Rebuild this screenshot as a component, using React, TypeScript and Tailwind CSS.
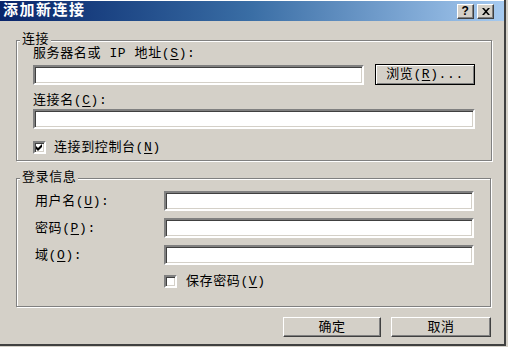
import { useState } from "react";

const font = "font-['Liberation_Mono','Noto_Sans_CJK_SC',monospace] text-[13px] leading-[13px] tracking-[0.6px] text-black";

const sunken =
  "border-2 border-t-[#808080] border-l-[#808080] border-b-white border-r-white bg-white shadow-[inset_1px_1px_0_#404040,inset_-1px_-1px_0_#d4d0c8]";

const raised =
  "border border-t-white border-l-white border-b-[#404040] border-r-[#404040] bg-[#d4d0c8] shadow-[inset_-1px_-1px_0_#808080]";

function Key({ k }: { k: string }) {
  return <span className="underline underline-offset-2">{k}</span>;
}

function Field({ className = "" }: { className?: string }) {
  return <input className={`${sunken} h-[20px] px-1 outline-none ${className}`} />;
}

function Check({ checked, onToggle }: { checked: boolean; onToggle: () => void }) {
  return (
    <button type="button" onClick={onToggle} className={`${sunken} flex h-[13px] w-[13px] items-center justify-center p-0`}>
      {checked && (
        <svg width="7" height="7" viewBox="0 0 7 7">
          <path d="M0 2 L2 4 L6 0 L6 3 L2 7 L0 5 Z" fill="#000" />
        </svg>
      )}
    </button>
  );
}

function Group({ title, children, className = "" }: { title: string; children: React.ReactNode; className?: string }) {
  return (
    <fieldset className={`border border-[#808080] shadow-[inset_1px_1px_0_#fff,1px_1px_0_#fff] ${className}`}>
      <legend className="ml-[3px] bg-[#d4d0c8] px-[2px] leading-[12px]">{title}</legend>
      {children}
    </fieldset>
  );
}

export default function App() {
  const [console_, setConsole] = useState(true);
  const [save, setSave] = useState(false);

  return (
    <div className={`h-[347px] w-[508px] bg-[#d4d0c8] ${font}`}>
      <div className="flex h-[346px] w-[506px] flex-col border-r-2 border-b-2 border-[#404040] shadow-[inset_0_1px_0_#fff]">
        {/* title bar */}
        <div className="mt-[1px] flex h-[20px] items-center justify-between bg-gradient-to-r from-[#0a246a] via-[#3a6ea5] to-[#a6caf0] pl-[3px] pr-[10px]">
          <span className="text-[15px] font-bold tracking-[1.5px] text-white">添加新连接</span>
          <div className="flex gap-[3px]">
            <button type="button" className={`${raised} flex h-[15px] w-[17px] items-center justify-center p-0 text-[12px] font-bold font-['Liberation_Sans',sans-serif]`}>
              ?
            </button>
            <button type="button" className={`${raised} flex h-[15px] w-[17px] items-center justify-center p-0`}>
              <svg width="8" height="7" viewBox="0 0 8 7">
                <path d="M0 0h2l2 2.2L6 0h2L5 3.5 8 7H6L4 4.8 2 7H0l3-3.5z" fill="#000" />
              </svg>
            </button>
          </div>
        </div>

        {/* connection */}
        <Group title="连接" className="mt-[13px] ml-[16px] w-[475px] pb-[6px]">
          <div className="px-[16px]">
            <div className="mt-[1px]">
              服务器名或 IP 地址(<Key k="S" />):
            </div>
            <div className="mt-[4px] flex items-center gap-[11px]">
              <Field className="w-[331px]" />
              <button type="button" className="h-[21px] w-[100px] border border-black bg-[#d4d0c8] p-0 shadow-[inset_1px_1px_0_#fff,inset_-1px_-1px_0_#808080]">
                浏览(<Key k="R" />)...
              </button>
            </div>
            <div className="mt-[9px]">
              连接名(<Key k="C" />):
            </div>
            <Field className="mt-[2px] w-full" />
            <label className="mt-[12px] flex items-center gap-[8px]">
              <Check checked={console_} onToggle={() => setConsole(v => !v)} />
              <span>
                连接到控制台(<Key k="N" />)
              </span>
            </label>
          </div>
        </Group>

        {/* login */}
        <Group title="登录信息" className="mt-[11px] ml-[16px] w-[475px] pr-[16px] pb-[18px]">
          <div className="mt-[7px] flex flex-col gap-[7px]">
            {[
              ["用户名", "U"],
              ["密码", "P"],
              ["域", "O"],
            ].map(([label, k]) => (
              <div key={k} className="flex items-center">
                <span className="w-[147px] pl-[18px]">
                  {label}(<Key k={k} />):
                </span>
                <Field className="flex-1" />
              </div>
            ))}
          </div>
          <label className="mt-[10px] ml-[147px] flex items-center gap-[9px]">
            <Check checked={save} onToggle={() => setSave(v => !v)} />
            <span>
              保存密码(<Key k="V" />)
            </span>
          </label>
        </Group>

        {/* buttons */}
        <div className="mt-[10px] flex justify-end gap-[10px] pr-[13px]">
          <button type="button" className={`${raised} h-[20px] w-[98px] p-0`}>确定</button>
          <button type="button" className={`${raised} h-[20px] w-[100px] p-0`}>取消</button>
        </div>
      </div>
    </div>
  );
}
